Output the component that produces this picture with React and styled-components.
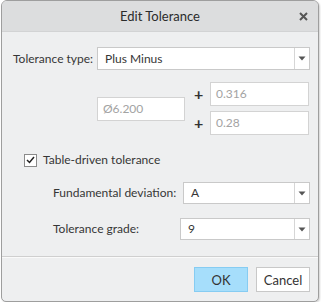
import React from "react";
import styled, { createGlobalStyle } from "styled-components";

const Global = createGlobalStyle`
  html, body { margin: 0; padding: 0; background: #ffffff; }
  body { font-family: "Segoe UI", Lato, "Noto Sans", sans-serif; color: #333; }
`;

const Dialog = styled.div`
  box-sizing: border-box;
  width: 318px;
  height: 302px;
  margin-left: 1px;
  border: 1px solid #9e9e9e;
  border-radius: 6px 6px 5px 5px;
  background: #eeeff0;
  box-shadow: 1px 1px 2px rgba(0,0,0,0.18);
  overflow: hidden;
  display: flex;
  flex-direction: column;
`;

const TitleBar = styled.div`
  height: 30px;
  flex: none;
  background: #dcddde;
  border-bottom: 1px solid #d2d3d4;
  display: flex;
  align-items: center;
  justify-content: center;
  position: relative;
  font-size: 13px;
  color: #2b2b2b;
`;

const Close = styled.svg`
  position: absolute;
  right: 10px;
  top: 11px;
`;

const Content = styled.div`
  display: flex;
  flex-direction: column;
  padding: 15px 8px 0 11px;
  font-size: 12px;
  line-height: 16px;
  color: #363636;
`;

const Row = styled.div`
  display: flex;
  align-items: center;
  margin-top: ${(p) => p.$mt || 0}px;
  padding-left: ${(p) => p.$indent || 0}px;
`;

const Label = styled.span`
  width: ${(p) => p.$w}px;
  flex: none;
  white-space: nowrap;
`;

const Select = styled.div`
  box-sizing: border-box;
  flex: 1;
  height: ${(p) => p.$h || 23}px;
  background: #fff;
  border: 1px solid #c9c9c9;
  display: flex;
  align-items: stretch;
`;

const SelectValue = styled.span`
  flex: 1;
  display: flex;
  align-items: center;
  padding-left: 7px;
`;

const Arrow = styled.span`
  width: 14px;
  border-left: 1px solid #d6d6d6;
  display: flex;
  align-items: center;
  justify-content: center;
`;

const ValuesBlock = styled.div`
  display: flex;
  align-items: center;
  margin-top: 12px;
  padding-left: 84px;
`;

const Field = styled.div`
  box-sizing: border-box;
  width: ${(p) => p.$w}px;
  height: 24px;
  background: #fff;
  border: 1px solid #d3d3d3;
  color: #a3a3a3;
  display: flex;
  align-items: center;
  padding-left: 5px;
`;

const Stack = styled.div`
  display: flex;
  flex-direction: column;
  gap: 5px;
  margin-left: 8px;
`;

const PlusRow = styled.div`
  display: flex;
  align-items: center;
`;

const Plus = styled.span`
  box-sizing: border-box;
  width: 17px;
  padding-left: 1px;
  font-size: 16px;
  font-weight: bold;
  color: #333;
  line-height: 1;
`;

const CheckRow = styled.label`
  display: flex;
  align-items: center;
  margin-top: 17px;
  padding-left: 11px;
  gap: 6px;
  height: 16px;
`;

const Box = styled.span`
  box-sizing: border-box;
  width: 13px;
  height: 13px;
  background: #fff;
  border: 1px solid #8a8a8a;
  display: flex;
  align-items: center;
  justify-content: center;
`;

const Separator = styled.div`
  margin-top: 16px;
  height: 1px;
  flex: none;
  background: #cfcfcf;
  border-bottom: 1px solid #fafafa;
`;

const Footer = styled.div`
  display: flex;
  justify-content: flex-end;
  gap: 8px;
  padding: 9px 8px 0 0;
`;

const Button = styled.button`
  box-sizing: border-box;
  width: 54px;
  height: 25px;
  font-family: inherit;
  font-size: 13px;
  color: #333;
  background: ${(p) => (p.$primary ? "#a6defb" : "#ffffff")};
  border: 1px solid ${(p) => (p.$primary ? "#86ccf2" : "#c8c8c8")};
  border-radius: 0;
  padding: 0;
`;

const ArrowIcon = () => (
  <svg width="8" height="5" viewBox="0 0 8 5">
    <path d="M0.5 0.5 H7.5 L4 4.5 Z" fill="#555" />
  </svg>
);

export default function App() {
  return (
    <>
      <Global />
      <Dialog>
        <TitleBar>
          Edit Tolerance
          <Close width="9" height="9" viewBox="0 0 9 9">
            <path d="M1 1 L8 8 M8 1 L1 8" stroke="#555" strokeWidth="2" />
          </Close>
        </TitleBar>
        <Content>
          <Row>
            <Label $w={84}>Tolerance type:</Label>
            <Select>
              <SelectValue>Plus Minus</SelectValue>
              <Arrow><ArrowIcon /></Arrow>
            </Select>
          </Row>
          <ValuesBlock>
            <Field $w={88}>Ø6.200</Field>
            <Stack>
              <PlusRow>
                <Plus>+</Plus>
                <Field $w={99}>0.316</Field>
              </PlusRow>
              <PlusRow>
                <Plus>+</Plus>
                <Field $w={99}>0.28</Field>
              </PlusRow>
            </Stack>
          </ValuesBlock>
          <CheckRow>
            <Box>
              <svg width="9" height="8" viewBox="0 0 9 8">
                <path d="M1 4 L3.5 6.5 L8 1" stroke="#222" strokeWidth="1.5" fill="none" />
              </svg>
            </Box>
            Table-driven tolerance
          </CheckRow>
          <Row $mt={14} $indent={40}>
            <Label $w={130}>Fundamental deviation:</Label>
            <Select $h={22}>
              <SelectValue>A</SelectValue>
              <Arrow><ArrowIcon /></Arrow>
            </Select>
          </Row>
          <Row $mt={14} $indent={40}>
            <Label $w={127}>Tolerance grade:</Label>
            <Select $h={22}>
              <SelectValue>9</SelectValue>
              <Arrow><ArrowIcon /></Arrow>
            </Select>
          </Row>
        </Content>
        <Separator />
        <Footer>
          <Button $primary>OK</Button>
          <Button>Cancel</Button>
        </Footer>
      </Dialog>
    </>
  );
}
